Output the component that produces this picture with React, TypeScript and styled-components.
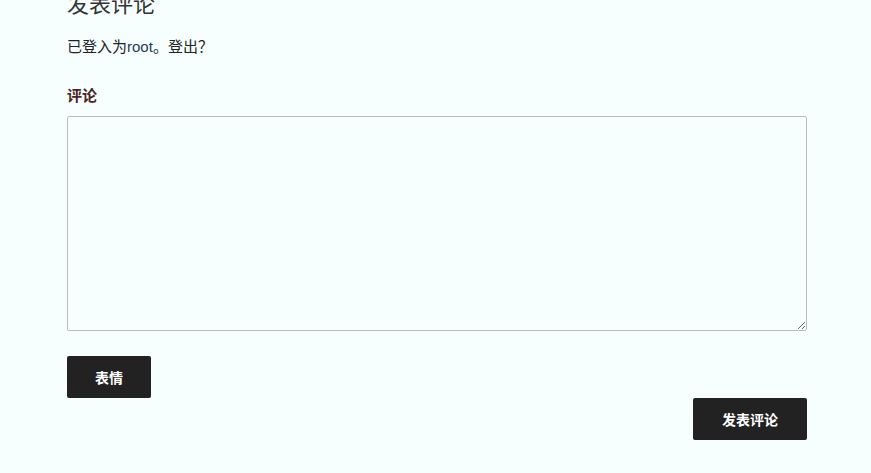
import React, { useState } from 'react';
import styled, { createGlobalStyle } from 'styled-components';

const GlobalStyle = createGlobalStyle`
  html, body {
    margin: 0;
    padding: 0;
    background: #f7fffe;
  }
  body {
    font-family: "Liberation Sans", Arial, "Noto Sans CJK SC", sans-serif;
    color: #222;
    overflow: hidden;
  }
`;

const CommentForm = styled.section`
  width: 740px;
  padding-left: 67px;
`;

const Title = styled.h3`
  margin: -8px 0 17px;
  font-size: 22px;
  line-height: 26px;
  font-weight: normal;
  color: #333;
`;

const LoggedIn = styled.p`
  margin: 0 0 25px;
  font-size: 15px;
  line-height: 24px;
`;

const Link = styled.a`
  color: #1d3b5c;
  text-decoration: none;
`;

const FieldLabel = styled.label`
  display: block;
  margin-bottom: 8px;
  font-size: 15px;
  line-height: 24px;
  font-weight: bold;
  color: #4a2424;
`;

const TextArea = styled.textarea`
  display: block;
  box-sizing: border-box;
  width: 100%;
  height: 215px;
  margin: 0 0 25px;
  padding: 8px;
  border: 1px solid #bbb;
  border-radius: 2px;
  background: transparent;
  font: inherit;
  outline: none;
`;

const Button = styled.button<{ $wide?: boolean }>`
  height: 42px;
  width: ${(p) => (p.$wide ? '114px' : '84px')};
  border: none;
  border-radius: 2px;
  background: #222;
  color: #fff;
  font-family: inherit;
  font-size: 14px;
  font-weight: bold;
  cursor: pointer;
`;

const ActionRow = styled.div<{ $end?: boolean }>`
  display: flex;
  justify-content: ${(p) => (p.$end ? 'flex-end' : 'flex-start')};
`;

const App: React.FC = () => {
  const [text, setText] = useState('');

  return (
    <>
      <GlobalStyle />
      <CommentForm>
        <Title>发表评论</Title>
        <LoggedIn>
          已登入为<Link href="#">root</Link>。<Link href="#" style={{ color: '#222' }}>登出？</Link>
        </LoggedIn>
        <FieldLabel htmlFor="comment">评论</FieldLabel>
        <TextArea id="comment" value={text} onChange={(e) => setText(e.target.value)} />
        <ActionRow>
          <Button type="button">表情</Button>
        </ActionRow>
        <ActionRow $end>
          <Button type="submit" $wide>发表评论</Button>
        </ActionRow>
      </CommentForm>
    </>
  );
};

export default App;
